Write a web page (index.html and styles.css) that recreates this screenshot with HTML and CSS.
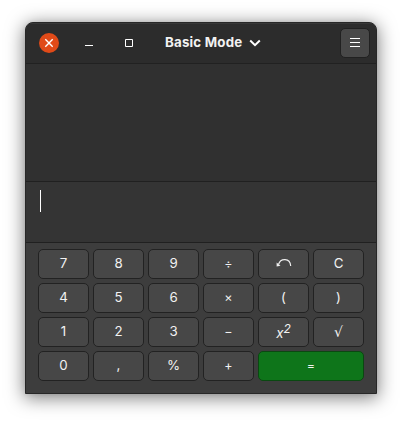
FILE: index.html
```
<!DOCTYPE html>
<html lang="en">
<head>
<meta charset="utf-8">
<title>Calculator</title>
<link rel="stylesheet" href="styles.css">
</head>
<body>
<main class="window">
  <header class="titlebar">
    <button class="control close" aria-label="Close"><svg width="20" height="20" viewBox="0 0 20 20"><path d="M6.3 6.3l7.4 7.4M13.7 6.3l-7.4 7.4"/></svg></button>
    <button class="control" aria-label="Minimize"><svg width="20" height="20" viewBox="0 0 20 20"><path class="thin" d="M6 12.5h8"/></svg></button>
    <button class="control" aria-label="Maximize"><svg width="20" height="20" viewBox="0 0 20 20"><path class="thin" d="M6.5 6.5h7v7h-7z"/></svg></button>
    <button class="mode"><span>Basic Mode</span><svg width="12" height="8" viewBox="0 0 12 8"><path class="thick" d="M1.2 1.5L6 6.200l4.800-4.700"/></svg></button>
    <button class="menu" aria-label="Menu"><svg width="10" height="10" viewBox="0 0 10 10"><path class="thin" d="M0 .5h10M0 4.500h10M0 8.500h10"/></svg></button>
  </header>
  <section class="history"></section>
  <section class="entry"><span class="caret"></span></section>
  <section class="keys">
    <button>7</button><button>8</button><button>9</button><button class="op">÷</button>
    <button aria-label="Undo"><svg class="undo" width="16" height="10" viewBox="0 0 16 10"><path class="arc" d="M2.500 6.500C4.500 0 14 -.3 14.700 8"/><path class="head" d="M.6 4.500v4l3.900-.7z"/></svg></button>
    <button>C</button>
    <button>4</button><button>5</button><button>6</button><button class="op">×</button><button>(</button><button>)</button>
    <button>1</button><button>2</button><button>3</button><button class="op">−</button><button class="power"><i>x<sup>2</sup></i></button><button class="root">√</button>
    <button>0</button><button>,</button><button>%</button><button class="op">+</button><button class="op equals">=</button>
  </section>
</main>
</body>
</html>
```
FILE: styles.css
```
* { box-sizing: border-box; }
body {
  margin: 0;
  padding: 22px 25px 28px;
  background: #fff;
  font-family: Inter, sans-serif;
}
button {
  margin: 0;
  padding: 0;
  border: 0;
  background: none;
  color: #f2f2f2;
  font: 13.3px Inter, sans-serif;
}
svg { display: block; fill: none; stroke: #fff; stroke-width: 1.4; }
.thin { stroke-width: 1; }
.thick { stroke-width: 2; }
.window {
  width: 352px;
  height: 372px;
  display: flex;
  flex-direction: column;
  overflow: hidden;
  border: 1px solid #272727;
  border-radius: 8px 8px 0 0;
  background: #3d3d3d;
  box-shadow: 0 3px 18px 1px rgba(0, 0, 0, .5), 0 0 4px rgba(0, 0, 0, .08);
}
.titlebar {
  height: 41px;
  display: flex;
  align-items: center;
  padding: 0 6px 0 13px;
  gap: 20px;
  background: #2c2c2c;
  border-bottom: 1px solid #212121;
  box-shadow: inset 0 1px #383838;
}
.control { width: 20px; height: 20px; border-radius: 50%; }
.close { background: #e04a18; }
.mode {
  display: flex;
  align-items: center;
  gap: 7px;
  margin-left: 6px;
  font-size: 13.3px;
  font-weight: 700;
  letter-spacing: .2px;
}
.mode span { padding-bottom: 2px; }
.menu {
  width: 30px;
  height: 30px;
  margin-left: auto;
  display: grid;
  place-items: center;
  border: 1px solid #212121;
  border-radius: 5px;
  background: #484848;
}
.history { height: 118px; background: #303030; border-bottom: 1px solid #202020; }
.entry { height: 61px; padding: 8px 14px; background: #343434; border-bottom: 1px solid #202020; }
.caret { display: block; width: 1px; height: 22px; background: #fff; }
.keys {
  display: grid;
  grid-template-columns: repeat(6, 51px);
  grid-auto-rows: 30px;
  gap: 4px;
  padding: 6px 12px;
}
.keys button {
  display: grid;
  place-items: center;
  padding: 0 0 2px;
  border: 1px solid #222;
  border-radius: 5px;
  background: #474747;
}
.keys .equals { grid-column: span 2; background: #0e751a; border-color: #0a4811; }
.keys .op { font-size: 12.5px; padding-bottom: 2px; }
.undo { stroke: #eee; }
.undo .arc { stroke-width: 1.2; }
.undo .head { fill: #eee; stroke: none; }
.keys .power { padding: 2px 0 0; }
.power sup { font-size: 12px; line-height: 0; vertical-align: 5px; }
.keys .root { padding-bottom: 0; font: italic 14px "DejaVu Sans", sans-serif; }
```
